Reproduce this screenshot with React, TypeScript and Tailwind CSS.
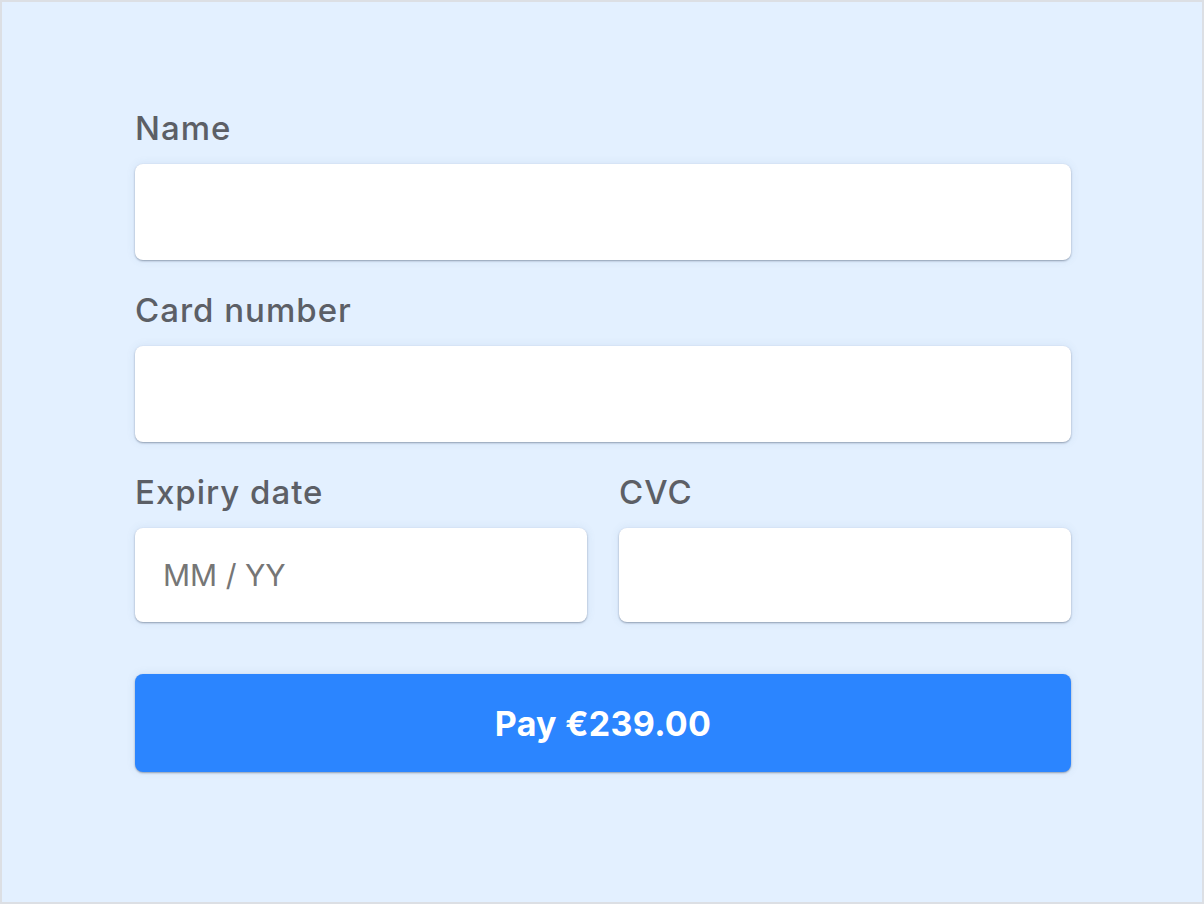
import React, { useState } from "react";

const inputClass =
  "w-full rounded-lg bg-white px-7 text-[30px] text-[#333] placeholder:text-[#767676] outline-none shadow-[0_1px_2px_rgba(30,45,70,0.4),0_0_10px_rgba(60,100,150,0.10)]";

const labelClass = "block text-[33px] leading-[36px] tracking-[1px] font-medium text-[#5c5f66] mb-[18px]";

const App = () => {
  const [name, setName] = useState("");
  const [card, setCard] = useState("");
  const [expiry, setExpiry] = useState("");
  const [cvc, setCvc] = useState("");

  return (
    <div
      className="w-[1204px] h-[904px] border-2 border-[#dcdfe4] bg-[#e3f0ff] pt-[108px] pl-[133px]"
      style={{ fontFamily: "Inter, 'Noto Sans', sans-serif" }}
    >
      <form className="w-[936px] flex flex-col" onSubmit={(e) => e.preventDefault()}>
        <div>
          <label htmlFor="name" className={labelClass}>Name</label>
          <input id="name" value={name} onChange={(e) => setName(e.target.value)} className={inputClass + " h-[96px]"} />
        </div>

        <div className="mt-[32px]">
          <label htmlFor="card" className={labelClass}>Card number</label>
          <input id="card" value={card} onChange={(e) => setCard(e.target.value)} className={inputClass + " h-[96px]"} />
        </div>

        <div className="mt-[32px] grid grid-cols-2 gap-8">
          <div>
            <label htmlFor="expiry" className={labelClass}>Expiry date</label>
            <input
              id="expiry"
              value={expiry}
              onChange={(e) => setExpiry(e.target.value)}
              placeholder="MM / YY"
              className={inputClass + " h-[94px]"}
            />
          </div>
          <div>
            <label htmlFor="cvc" className={labelClass}>CVC</label>
            <input id="cvc" value={cvc} onChange={(e) => setCvc(e.target.value)} className={inputClass + " h-[94px]"} />
          </div>
        </div>

        <button
          type="submit"
          className="mt-[52px] h-[98px] w-full rounded-lg bg-[#2b85ff] text-white text-[34px] tracking-[0.3px] font-bold shadow-[0_1px_2px_rgba(30,45,70,0.4),0_0_10px_rgba(60,100,150,0.10)]"
        >
          Pay €239.00
        </button>
      </form>
    </div>
  );
};

export default App;
